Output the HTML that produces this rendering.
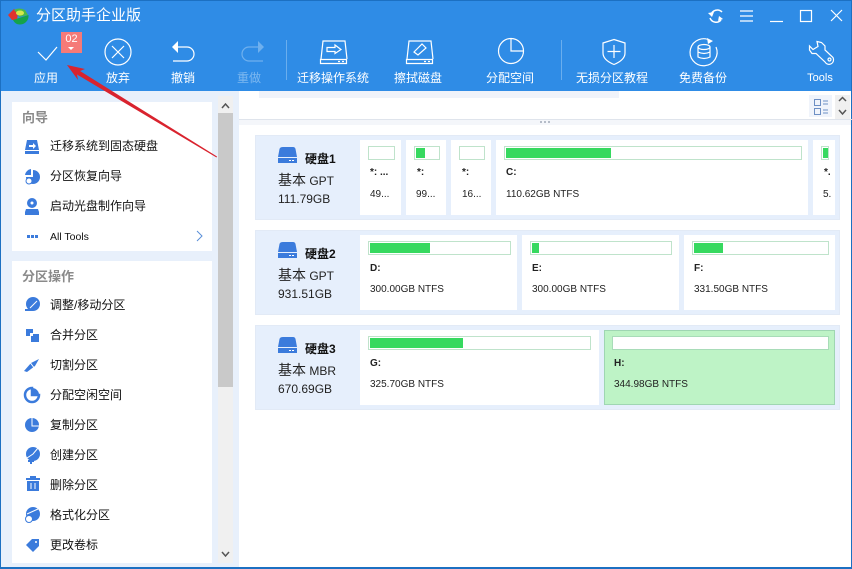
<!DOCTYPE html>
<html><head><meta charset="utf-8"><style>
*{box-sizing:border-box;margin:0;padding:0}
html,body{width:852px;height:569px;overflow:hidden;background:#fff}
body{position:relative;font-family:"Liberation Sans","Noto Sans CJK SC",sans-serif;font-size:12px;color:#111}
.a{position:absolute;white-space:nowrap}
.tb{position:absolute;top:70px;height:16px;line-height:16px;color:#fff;font-size:12px;text-align:center;white-space:nowrap;transform:translateX(-50%)}
.h{position:absolute;left:22px;color:#8a8a8a;font-size:13px;font-weight:bold;line-height:16px}
.m{position:absolute;left:50px;font-size:12px;line-height:16px;color:#111;white-space:nowrap}
.p{position:absolute;background:#fff;height:75px}
.b{position:absolute;height:14px;border:1px solid #bfe3cb;background:#fff}
.f{position:absolute;height:10px;background:#36d95f}
.d{position:absolute;width:585px;left:255px;height:85px;background:#e6effc;border:1px solid #e2eaf6}
.l{position:absolute;font-size:10px;line-height:13px;font-weight:bold;color:#222;white-space:nowrap}
.s{position:absolute;font-size:10px;line-height:13px;color:#222;white-space:nowrap}
.t{position:absolute;left:278px;font-size:12px;line-height:18px;color:#222;white-space:nowrap}
.t span{font-size:14px}
.n{position:absolute;left:305px;font-weight:bold;font-size:12px;line-height:16px;color:#111;white-space:nowrap}
</style></head><body>
<div class="a" style="left:0;top:0;width:852px;height:91px;background:#2f8ce6"></div>
<div class="a" style="left:0;top:0;width:852px;height:1px;background:#1c70c2"></div>
<div class="a" style="left:0;top:91px;width:239px;height:478px;background:#e8f0fb"></div>
<div class="a" style="left:0;top:0;width:1px;height:569px;background:#1c70c2"></div>
<div class="a" style="left:851px;top:0;width:1px;height:569px;background:#1c70c2"></div>
<div class="a" style="left:0;top:567px;width:852px;height:2px;background:#1c70c2"></div>

<svg class="a" style="left:7px;top:7px" width="22" height="19" viewBox="0 0 22 19"><path d="M1 8L7 2 11 5 10 13 5 13z" fill="#e0342e"/><path d="M7 3Q12 0 18 3L21 8 12 10 10 6z" fill="#4db848"/><path d="M6 13Q12 11 21.500 8 22 14 16 17 9 19 6 13z" fill="#15a34a"/><ellipse cx="13" cy="6" rx="4" ry="2.500" fill="#d7e84a"/></svg>
<div class="a" style="left:36px;top:6px;color:#fff;font-size:15px;line-height:20px">分区助手企业版</div>

<svg class="a" style="left:0;top:0" width="852" height="92" fill="none" stroke="#fff" stroke-width="1.2">
<path d="M38 52L46 60 57 47"/>
<circle cx="118" cy="52" r="13"/><path d="M112 46L124 58M124 46L112 58"/>
<path d="M176 47H187A7 7 0 0 1 187 61H173"/><path d="M172 47L178 41V53z" fill="#fff" stroke="none"/>
<g stroke="#6fb0ee"><path d="M260 47H249A7 7 0 0 0 249 61H263"/><path d="M264 47L258 41V53z" fill="#6fb0ee" stroke="none"/></g>
<path d="M286.500 40V80M561.500 40V80" stroke="#6aaeee" stroke-width="1"/>
<path d="M321 59L323 41H345L347 59M320.500 59.500H346.500V63.500H320.500z"/><path d="M327 47.500H335V45L341 49.500 335 53.500V51.500H327z"/><path d="M338 61.500H340M342 61.500H344"/>
<path d="M407 59L409 41H431L433 59M406.500 59.500H432.500V63.500H406.500z"/><path d="M414 52L422 44 426 48 418 55z"/><path d="M424 61.500H426M428 61.500H430"/>
<circle cx="511" cy="51" r="12.500"/><path d="M511 38.500V51H523.500"/>
<path d="M614 39.500L625 43V53Q625 60 614 64.500 603 60 603 53V43z"/><path d="M614 45V58M607.500 51.500H620.500"/>
<path d="M711 41A13.500 13.500 0 1 0 716 47"/><path d="M707 38L713 41 708 44z" fill="#fff" stroke="none"/><ellipse cx="704" cy="47" rx="6" ry="2.500"/><path d="M698 47V57Q704 60 710 57V47M698 52Q704 55 710 52"/>
<path d="M817 41.500L821.500 42.500 825 46V50L833 57.500A4.500 4.500 0 1 1 825 62L816 53.500H812L809.500 50V46L813 49.500 818 46.500z"/><circle cx="829.500" cy="59.500" r="1.500"/>
<path d="M722 12A6.500 6.500 0 0 0 711 15M710 18A6.500 6.500 0 0 0 721 20" stroke-width="1.500"/><path d="M708 13L712 17 714 12zM723 19L719 16 718 21z" fill="#fff" stroke="none"/>
<path d="M740 11H753M740 16H753M740 21H753"/>
<path d="M770 21.500H783"/>
<rect x="800.500" y="10.500" width="11" height="11"/>
<path d="M831 10L842 21M842 10L831 21"/>
</svg>

<div class="a" style="left:61px;top:32px;width:21px;height:21px;background:#f57a78;color:#fff;font-size:11px;line-height:13px;text-align:center;padding-top:1px">02</div>
<div class="a" style="left:68px;top:47px;width:0;height:0;border:3.500px solid transparent;border-top:3.500px solid #fff"></div>

<div class="tb" style="left:46px">应用</div>
<div class="tb" style="left:118px">放弃</div>
<div class="tb" style="left:183px">撤销</div>
<div class="tb" style="left:249px;color:#7db8f0">重做</div>
<div class="tb" style="left:333px">迁移操作系统</div>
<div class="tb" style="left:418px">擦拭磁盘</div>
<div class="tb" style="left:510px">分配空间</div>
<div class="tb" style="left:612px">无损分区教程</div>
<div class="tb" style="left:703px">免费备份</div>
<div class="tb" style="left:820px;font-size:11px">Tools</div>

<div class="a" style="left:12px;top:102px;width:200px;height:149px;background:#fff"></div>
<div class="a" style="left:12px;top:261px;width:200px;height:302px;background:#fff"></div>
<div class="h" style="top:110px">向导</div>
<div class="h" style="top:269px">分区操作</div>
<div class="m" style="top:138px">迁移系统到固态硬盘</div>
<div class="m" style="top:168px">分区恢复向导</div>
<div class="m" style="top:198px">启动光盘制作向导</div>
<div class="m" style="top:229px;font-size:10.500px">All Tools</div>
<div class="m" style="top:297px">调整/移动分区</div>
<div class="m" style="top:327px">合并分区</div>
<div class="m" style="top:357px">切割分区</div>
<div class="m" style="top:387px">分配空闲空间</div>
<div class="m" style="top:417px">复制分区</div>
<div class="m" style="top:447px">创建分区</div>
<div class="m" style="top:477px">删除分区</div>
<div class="m" style="top:507px">格式化分区</div>
<div class="m" style="top:537px">更改卷标</div>

<svg class="a" style="left:0;top:0" width="240" height="569" fill="#3b7bdc">
<path d="M27 140H37L39 150H25z"/><rect x="25" y="151" width="14" height="3"/><path d="M29 145H33V143L36 146 33 149V147H29z" fill="#fff"/>
<path d="M33 170A7 7 0 1 1 26 177H33z"/><path d="M31 169V175H25A7 7 0 0 1 31 169z"/><circle cx="29" cy="181" r="3" fill="#fff" stroke="#3b7bdc"/>
<circle cx="32" cy="203" r="5"/><circle cx="32" cy="203" r="1.500" fill="#fff"/><path d="M26 209H38L39 212H25z"/><rect x="25" y="212" width="14" height="3"/>
<rect x="27" y="235" width="3" height="3"/><rect x="31" y="235" width="3" height="3"/><rect x="35" y="235" width="3" height="3"/>
<circle cx="33" cy="304" r="7"/><path d="M30 308L37 301" stroke="#fff"/><path d="M25 310H33" stroke="#3b7bdc" stroke-width="2"/>
<rect x="26" y="329" width="7" height="7"/><rect x="31" y="334" width="8" height="8"/><rect x="30" y="333" width="3" height="3" fill="#fff"/>
<path d="M24 371L31 363 39 359 35 366 27 372z"/><path d="M29 361L35 369" stroke="#fff"/>
<path d="M32 388A7 7 0 1 0 39 395H32z" fill="none" stroke="#3b7bdc" stroke-width="2.500"/><path d="M33 388A7 7 0 0 1 39 394H33z"/>
<circle cx="32" cy="425" r="7"/><path d="M32 418V426H40" stroke="#fff" fill="none"/>
<circle cx="33" cy="454" r="7"/><path d="M28 461H34M31 458V464" stroke="#3b7bdc" stroke-width="2"/><path d="M27 458L33 454 38 448" stroke="#fff" fill="none"/>
<path d="M27 481H39V491H27z"/><rect x="26" y="478" width="14" height="2"/><rect x="30" y="476" width="6" height="2"/><path d="M31 483V489M35 483V489" stroke="#fff"/>
<circle cx="33" cy="514" r="7"/><path d="M27 514L38 509" stroke="#fff" fill="none"/><circle cx="29" cy="519" r="3.500" fill="#fff" stroke="#3b7bdc"/>
<path d="M32 539H39V546L33 552 26 545z"/><circle cx="36" cy="542" r="1" fill="#fff"/>
<path d="M197 231L202 236 197 241" fill="none" stroke="#5a8fd8"/>
</svg>

<div class="a" style="left:218px;top:96px;width:15px;height:467px;background:#f0f0f0"></div>
<div class="a" style="left:218px;top:113px;width:15px;height:274px;background:#c9c9c9"></div>
<svg class="a" style="left:218px;top:96px" width="15" height="467" fill="none" stroke="#555" stroke-width="1.500"><path d="M4 12L7.500 8 11 12M4 456L7.500 460 11 456"/></svg>

<div class="a" style="left:259px;top:91px;width:360px;height:7px;background:#f0f3fa"></div>
<div class="a" style="left:239px;top:119px;width:613px;height:1px;background:#dfe4ec"></div>
<div class="a" style="left:239px;top:120px;width:612px;height:5px;background:#f4f6fa"></div>
<div class="a" style="left:540px;top:121px;width:12px;height:2px;background:repeating-linear-gradient(90deg,#b5bcc8 0 2px,transparent 2px 4px)"></div>
<div class="a" style="left:809px;top:95px;width:23px;height:22px;background:#f0f4fb"></div>
<svg class="a" style="left:809px;top:95px" width="43" height="24" fill="none" stroke="#6d8fc4"><path d="M5.500 4.500H11.500V10.500H5.500zM5.500 13.500H11.500V19.500H5.500zM14 6H19M14 9H19M14 15H19M14 18H19"/></svg>
<div class="a" style="left:835px;top:95px;width:15px;height:24px;background:#f0f0f0"></div>
<svg class="a" style="left:835px;top:95px" width="15" height="24" fill="none" stroke="#555" stroke-width="1.500"><path d="M4 6L7.500 2.500 11 6M4 15L7.500 19 11 15"/></svg>

<div class="d" style="top:135px"></div><div class="d" style="top:230px"></div><div class="d" style="top:325px"></div>

<svg class="a" style="left:0;top:0" width="300" height="400" fill="#3b7bdc">
<g><path d="M283 147H293Q295 147 295.500 149L297 157H278L279.500 149Q280 147 283 147z"/><rect x="278" y="158" width="19" height="5"/><rect x="289" y="160" width="2" height="1" fill="#fff"/><rect x="292" y="160" width="2" height="1" fill="#fff"/></g>
<g transform="translate(0,95)"><path d="M283 147H293Q295 147 295.500 149L297 157H278L279.500 149Q280 147 283 147z"/><rect x="278" y="158" width="19" height="5"/><rect x="289" y="160" width="2" height="1" fill="#fff"/><rect x="292" y="160" width="2" height="1" fill="#fff"/></g>
<g transform="translate(0,190)"><path d="M283 147H293Q295 147 295.500 149L297 157H278L279.500 149Q280 147 283 147z"/><rect x="278" y="158" width="19" height="5"/><rect x="289" y="160" width="2" height="1" fill="#fff"/><rect x="292" y="160" width="2" height="1" fill="#fff"/></g>
</svg>
<div class="n" style="top:151px">硬盘1</div>
<div class="t" style="top:171px"><span>基本</span> GPT</div>
<div class="t" style="top:190px">111.79GB</div>
<div class="n" style="top:246px">硬盘2</div>
<div class="t" style="top:266px"><span>基本</span> GPT</div>
<div class="t" style="top:285px">931.51GB</div>
<div class="n" style="top:341px">硬盘3</div>
<div class="t" style="top:361px"><span>基本</span> MBR</div>
<div class="t" style="top:380px">670.69GB</div>

<!-- disk 1 -->
<div class="p" style="left:360px;top:140px;width:41px"></div>
<div class="p" style="left:406px;top:140px;width:40px"></div>
<div class="p" style="left:451px;top:140px;width:40px"></div>
<div class="p" style="left:496px;top:140px;width:312px"></div>
<div class="p" style="left:813px;top:140px;width:22px"></div>
<div class="b" style="left:368px;top:146px;width:27px"></div>
<div class="b" style="left:414px;top:146px;width:26px"></div><div class="f" style="left:416px;top:148px;width:9px"></div>
<div class="b" style="left:459px;top:146px;width:26px"></div>
<div class="b" style="left:504px;top:146px;width:298px"></div><div class="f" style="left:506px;top:148px;width:105px"></div>
<div class="b" style="left:821px;top:146px;width:8px"></div><div class="f" style="left:823px;top:148px;width:5px"></div>
<div class="l" style="left:370px;top:166px">*: ...</div>
<div class="l" style="left:417px;top:166px">*:</div>
<div class="l" style="left:462px;top:166px">*:</div>
<div class="l" style="left:506px;top:166px">C:</div>
<div class="l" style="left:824px;top:166px">*.</div>
<div class="s" style="left:370px;top:188px">49...</div>
<div class="s" style="left:416px;top:188px">99...</div>
<div class="s" style="left:462px;top:188px">16...</div>
<div class="s" style="left:506px;top:188px">110.62GB NTFS</div>
<div class="s" style="left:823px;top:188px">5.</div>

<!-- disk 2 -->
<div class="p" style="left:360px;top:235px;width:157px"></div>
<div class="p" style="left:522px;top:235px;width:157px"></div>
<div class="p" style="left:684px;top:235px;width:151px"></div>
<div class="b" style="left:368px;top:241px;width:143px"></div><div class="f" style="left:370px;top:243px;width:60px"></div>
<div class="b" style="left:530px;top:241px;width:142px"></div><div class="f" style="left:532px;top:243px;width:7px"></div>
<div class="b" style="left:692px;top:241px;width:137px"></div><div class="f" style="left:694px;top:243px;width:29px"></div>
<div class="l" style="left:370px;top:262px">D:</div>
<div class="l" style="left:532px;top:262px">E:</div>
<div class="l" style="left:694px;top:262px">F:</div>
<div class="s" style="left:370px;top:283px">300.00GB NTFS</div>
<div class="s" style="left:532px;top:283px">300.00GB NTFS</div>
<div class="s" style="left:694px;top:283px">331.50GB NTFS</div>

<!-- disk 3 -->
<div class="p" style="left:360px;top:330px;width:239px"></div>
<div class="p" style="left:604px;top:330px;width:231px;background:#bef3c6;border:1px solid #9fd6b2"></div>
<div class="b" style="left:368px;top:336px;width:223px"></div><div class="f" style="left:370px;top:338px;width:93px"></div>
<div class="b" style="left:612px;top:336px;width:217px;border-color:#a8dcb8"></div>
<div class="l" style="left:370px;top:357px">G:</div>
<div class="l" style="left:614px;top:357px">H:</div>
<div class="s" style="left:370px;top:378px">325.70GB NTFS</div>
<div class="s" style="left:614px;top:378px">344.98GB NTFS</div>

<svg class="a" style="left:0;top:0" width="240" height="170"><path d="M67 65L85 69 80 71 217 156.500 216.500 157.500 77 74.500 78 80z" fill="#d9232e"/></svg>
</body></html>
